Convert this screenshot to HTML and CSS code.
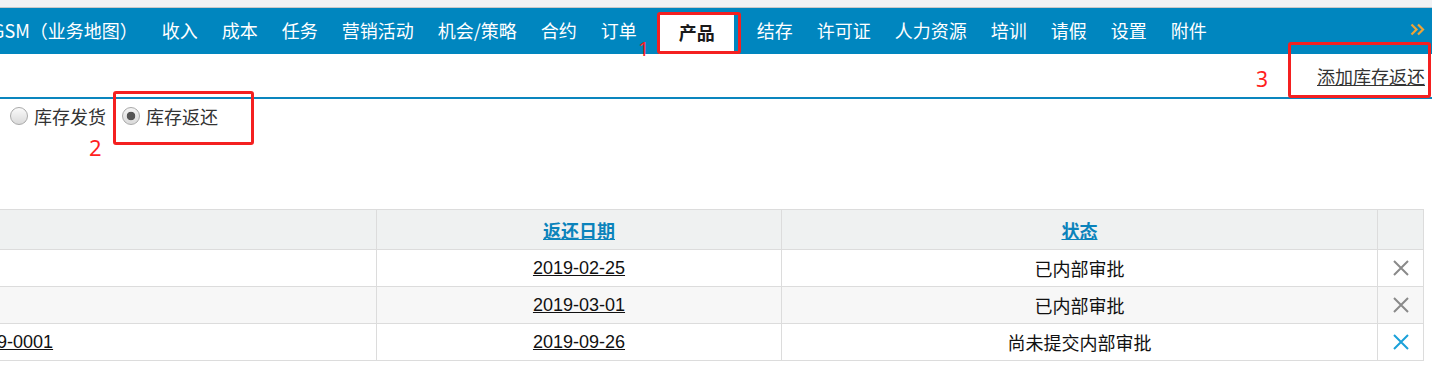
FILE: index.html
```html
<!DOCTYPE html>
<html lang="zh-CN">
<head>
    <meta charset="UTF-8">
    <title>库存返还</title>
    <link rel="stylesheet" href="styles.css">
</head>
<body>

    <div class="top-strip"></div>

    <header class="menubar">
        <ul class="menu">
            <li><a href="#">GSM（业务地图）</a></li>
            <li><a href="#">收入</a></li>
            <li><a href="#">成本</a></li>
            <li><a href="#">任务</a></li>
            <li><a href="#">营销活动</a></li>
            <li><a href="#">机会/策略</a></li>
            <li><a href="#">合约</a></li>
            <li><a href="#">订单</a></li>
            <li class="active"><a href="#">产品</a></li>
            <li><a href="#">结存</a></li>
            <li><a href="#">许可证</a></li>
            <li><a href="#">人力资源</a></li>
            <li><a href="#">培训</a></li>
            <li><a href="#">请假</a></li>
            <li><a href="#">设置</a></li>
            <li><a href="#">附件</a></li>
        </ul>
        <a href="#" class="menu-more">
            <svg width="15" height="13" viewBox="0 0 15 13">
                <path d="M1.5 1.5 L6.5 6.5 L1.5 11.5 M8 1.5 L13 6.5 L8 11.5" fill="none" stroke="#eda437" stroke-width="2.2"/>
            </svg>
        </a>
    </header>

    <div class="toolbar">
        <a href="#" class="add-link">添加库存返还</a>
    </div>

    <div class="filter">
        <label class="radio"><input type="radio" name="kind"> 库存发货</label>
        <label class="radio"><input type="radio" name="kind" checked> 库存返还</label>
    </div>

    <table class="grid">
        <colgroup>
            <col class="col-no">
            <col class="col-date">
            <col class="col-status">
            <col class="col-del">
        </colgroup>
        <thead>
            <tr>
                <th></th>
                <th><a href="#">返还日期</a></th>
                <th><a href="#">状态</a></th>
                <th></th>
            </tr>
        </thead>
        <tbody>
            <tr>
                <td class="no"></td>
                <td class="date"><a href="#">2019-02-25</a></td>
                <td>已内部审批</td>
                <td class="del"><svg width="18" height="18" viewBox="0 0 18 18"><path d="M2 2 L16 16 M16 2 L2 16" stroke="#8a8a8a" stroke-width="2"/></svg></td>
            </tr>
            <tr class="alt">
                <td class="no"></td>
                <td class="date"><a href="#">2019-03-01</a></td>
                <td>已内部审批</td>
                <td class="del"><svg width="18" height="18" viewBox="0 0 18 18"><path d="M2 2 L16 16 M16 2 L2 16" stroke="#8a8a8a" stroke-width="2"/></svg></td>
            </tr>
            <tr>
                <td class="no"><a href="#">RS-2019-0001</a></td>
                <td class="date"><a href="#">2019-09-26</a></td>
                <td>尚未提交内部审批</td>
                <td class="del"><svg width="18" height="18" viewBox="0 0 18 18"><path d="M2 2 L16 16 M16 2 L2 16" stroke="#1ba1d9" stroke-width="2"/></svg></td>
            </tr>
        </tbody>
    </table>

    <!-- screenshot annotations -->
    <div class="mark mark-1"></div>
    <span class="mark-num num-1">1</span>
    <div class="mark mark-2"></div>
    <span class="mark-num num-2">2</span>
    <div class="mark mark-3"></div>
    <span class="mark-num num-3">3</span>

</body>
</html>
```

FILE: styles.css
```css
:root {
    --blue: #0086bf;
    --line-blue: #0a86be;
    --border: #dcdcdc;
    --text: #222;
    --mark-red: #f42020;
}
html, body { overflow: hidden; }
body {
    margin: 0;
    font-family: "Noto Sans CJK SC", "Noto Sans", sans-serif;
    font-size: 18px;
    color: var(--text);
    background: #fff;
    position: relative;
}
a { color: inherit; }

.top-strip {
    height: 7px;
    background: #f1f2f4;
    border-bottom: 1px solid #c9c9c9;
}

/* Top menu */
.menubar {
    height: 46px;
    background: var(--blue);
    display: flex;
    justify-content: space-between;
    align-items: stretch;
}
.menu {
    list-style: none;
    margin: 0 0 0 -20px;
    padding: 0;
    display: flex;
    white-space: nowrap;
}
.menu li { display: flex; }
.menu a {
    display: block;
    padding: 0 12px;
    line-height: 45px;
    color: #fff;
    text-decoration: none;
}
.menu li.active {
    align-self: flex-end;
    height: 40px;
    margin: 0 11px 0 10px;
    background: #fff;
}
.menu li.active a {
    padding: 0 19px 0 20px;
    line-height: 37px;
    color: #1a1a1a;
    font-weight: 700;
}
.menu-more {
    display: flex;
    align-items: center;
    padding: 0 7px 4px 0;
}

/* Toolbar with add link */
.toolbar {
    height: 43px;
    border-bottom: 2px solid var(--line-blue);
    display: flex;
    justify-content: flex-end;
    align-items: center;
    padding-right: 7px;
}
.add-link { color: #333; }

/* Radio filter */
.filter {
    height: 33px;
    display: flex;
    align-items: center;
    gap: 16px;
    padding-left: 10px;
}
.radio {
    display: flex;
    align-items: center;
    gap: 6px;
    color: #333;
}
.radio input {
    appearance: none;
    -webkit-appearance: none;
    margin: 0;
    width: 18px;
    height: 18px;
    border: 1px solid #a9a9a9;
    border-radius: 50%;
    background: linear-gradient(#fafafa, #dadada);
    box-sizing: border-box;
}
.radio input:checked {
    background: radial-gradient(circle, #555 0 4px, transparent 4.6px), linear-gradient(#f4f4f4, #dadada);
}

/* Data table */
.grid {
    margin: 77px 0 0 -75px;
    width: 1498px;
    table-layout: fixed;
    border-collapse: collapse;
}
.col-no { width: 451px; }
.col-date { width: 405px; }
.col-status { width: 596px; }
.col-del { width: 46px; }
.grid th, .grid td {
    border: 1px solid var(--border);
    padding: 0;
    text-align: center;
    white-space: nowrap;
}
.grid th {
    height: 39px;
    background: #eff1f1;
}
.grid th a {
    color: #0b83bb;
    font-weight: 700;
}
.grid td { height: 36px; color: #111; }
.grid tr.alt td { background: #f7f7f7; }
.grid td.no {
    text-align: left;
    padding-left: 10px;
    font-family: "Liberation Sans", Arial, sans-serif;
}
.grid td.date { font-family: "Liberation Sans", Arial, sans-serif; }
.grid td a { color: #111; }
.grid td.del svg { display: block; margin: 0 auto; }

/* Red annotation boxes drawn on top of the screenshot */
.mark {
    position: absolute;
    border: 3px solid var(--mark-red);
    border-radius: 3px;
    box-sizing: border-box;
}
.mark-1 { left: 657px; top: 12px; width: 84px; height: 42px; }
.mark-2 { left: 113px; top: 91px; width: 141px; height: 54px; }
.mark-3 { left: 1288px; top: 42px; width: 143px; height: 56px; }
.mark-num {
    position: absolute;
    color: #ff1f1f;
    font-family: "Noto Sans", sans-serif;
    font-size: 20px;
    line-height: 1;
}
.num-1 { left: 638px; top: 39px; }
.num-2 { left: 89px; top: 136px; font-size: 22px; }
.num-3 { left: 1256px; top: 69px; font-size: 21px; }
```
